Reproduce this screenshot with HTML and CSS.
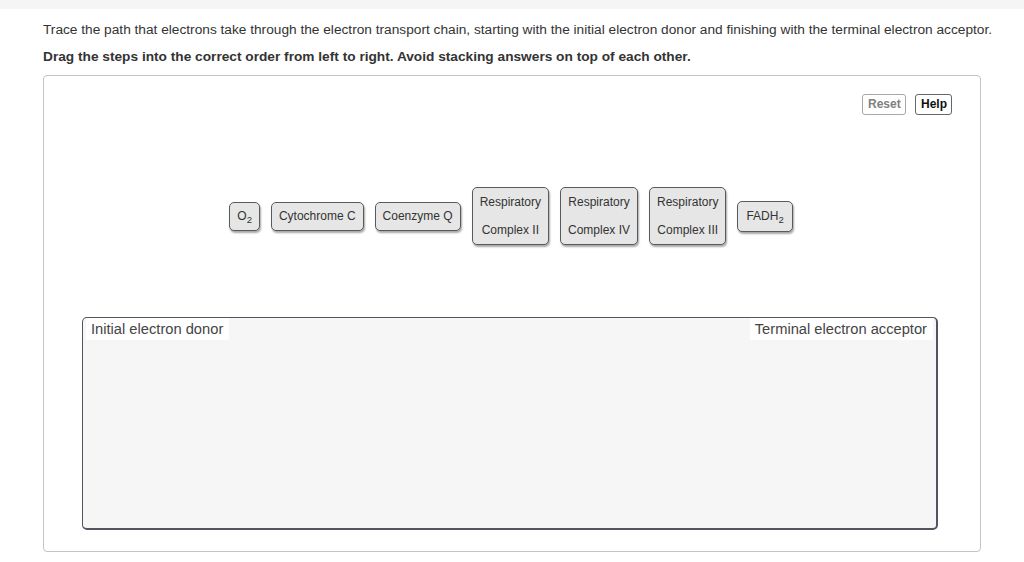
FILE: index.html
```html
<!DOCTYPE html>
<html>
<head>
<meta charset="utf-8">
<link rel="stylesheet" href="styles.css">
</head>
<body>
<div class="topbar"></div>
<main class="content">
  <p class="prompt">Trace the path that electrons take through the electron transport chain, starting with the initial electron donor and finishing with the terminal electron acceptor.</p>
  <p class="instr">Drag the steps into the correct order from left to right. Avoid stacking answers on top of each other.</p>
  <section class="board">
    <div class="toolbar">
      <button class="btn btn-reset">Reset</button>
      <button class="btn btn-help">Help</button>
    </div>
    <div class="tiles">
      <div class="tile">O<sub>2</sub></div>
      <div class="tile">Cytochrome C</div>
      <div class="tile">Coenzyme Q</div>
      <div class="tile tile-two">Respiratory<br>Complex II</div>
      <div class="tile tile-two">Respiratory<br>Complex IV</div>
      <div class="tile tile-two">Respiratory<br>Complex III</div>
      <div class="tile tile-fadh">FADH<sub>2</sub></div>
    </div>
    <div class="dropzone">
      <span class="zone-label">Initial electron donor</span>
      <span class="zone-label">Terminal electron acceptor</span>
    </div>
  </section>
</main>
</body>
</html>
```
FILE: styles.css
```css
* { box-sizing: border-box; }
html, body { margin: 0; padding: 0; background: #fff; }
body {
  font-family: "Liberation Sans", Arial, Helvetica, sans-serif;
  color: #333;
  width: 1024px;
  height: 562px;
  overflow: hidden;
}
.topbar { height: 9px; background: #f5f5f5; }
.content { padding: 12px 0 0 43px; }
.prompt {
  margin: 0;
  font-size: 13.7px;
  line-height: 18px;
  color: #333;
  white-space: nowrap;
}
.instr {
  margin: 9px 0 0;
  font-size: 13.7px;
  line-height: 18px;
  font-weight: bold;
  color: #333;
  white-space: nowrap;
}
.board {
  margin-top: 9px;
  width: 938px;
  height: 477px;
  border: 1px solid #c4c4c4;
  border-radius: 4px;
  display: flex;
  flex-direction: column;
}
.toolbar {
  margin-top: 18px;
  padding-right: 28px;
  display: flex;
  justify-content: flex-end;
  gap: 9px;
}
.btn {
  height: 21px;
  padding: 0 5px;
  font-family: inherit;
  font-size: 12px;
  font-weight: bold;
  background: #fff;
  border-radius: 3px;
  line-height: 19px;
}
.btn-reset { color: #808080; border: 1px solid #a8a8a8; width: 44px; }
.btn-help { color: #111; border: 1px solid #666; width: 37px; }
.tiles {
  margin-top: 72px;
  height: 58px;
  display: flex;
  justify-content: center;
  align-items: center;
  gap: 11px;
  padding-left: 2px;
  padding-right: 4px;
}
.tile {
  background: #e6e6e6;
  border: 1px solid #5a5a5a;
  border-radius: 5px;
  box-shadow: 1px 2px 2px rgba(0,0,0,0.35);
  font-size: 12px;
  color: #333;
  line-height: 27px;
  padding: 0 7px;
  text-align: center;
  white-space: nowrap;
}
.tile sub { font-size: 9.5px; vertical-align: -3px; line-height: 0; }
.tile-two { line-height: 28px; padding: 0 7px; height: 58px; }
.tile-fadh { line-height: 29px; padding: 0 8px; }
.dropzone {
  margin: 72px 0 0 38px;
  width: 856px;
  height: 213px;
  background: #f6f6f6;
  border: 1px solid #55535f;
  border-right-width: 2px;
  border-bottom-width: 2px;
  border-radius: 5px;
  display: flex;
  justify-content: space-between;
  align-items: flex-start;
  padding: 0 3px 0 3px;
}
.zone-label {
  background: #fff;
  font-size: 14.7px;
  color: #444;
  line-height: 22px;
  padding: 0 6px 0 5px;
}
```
